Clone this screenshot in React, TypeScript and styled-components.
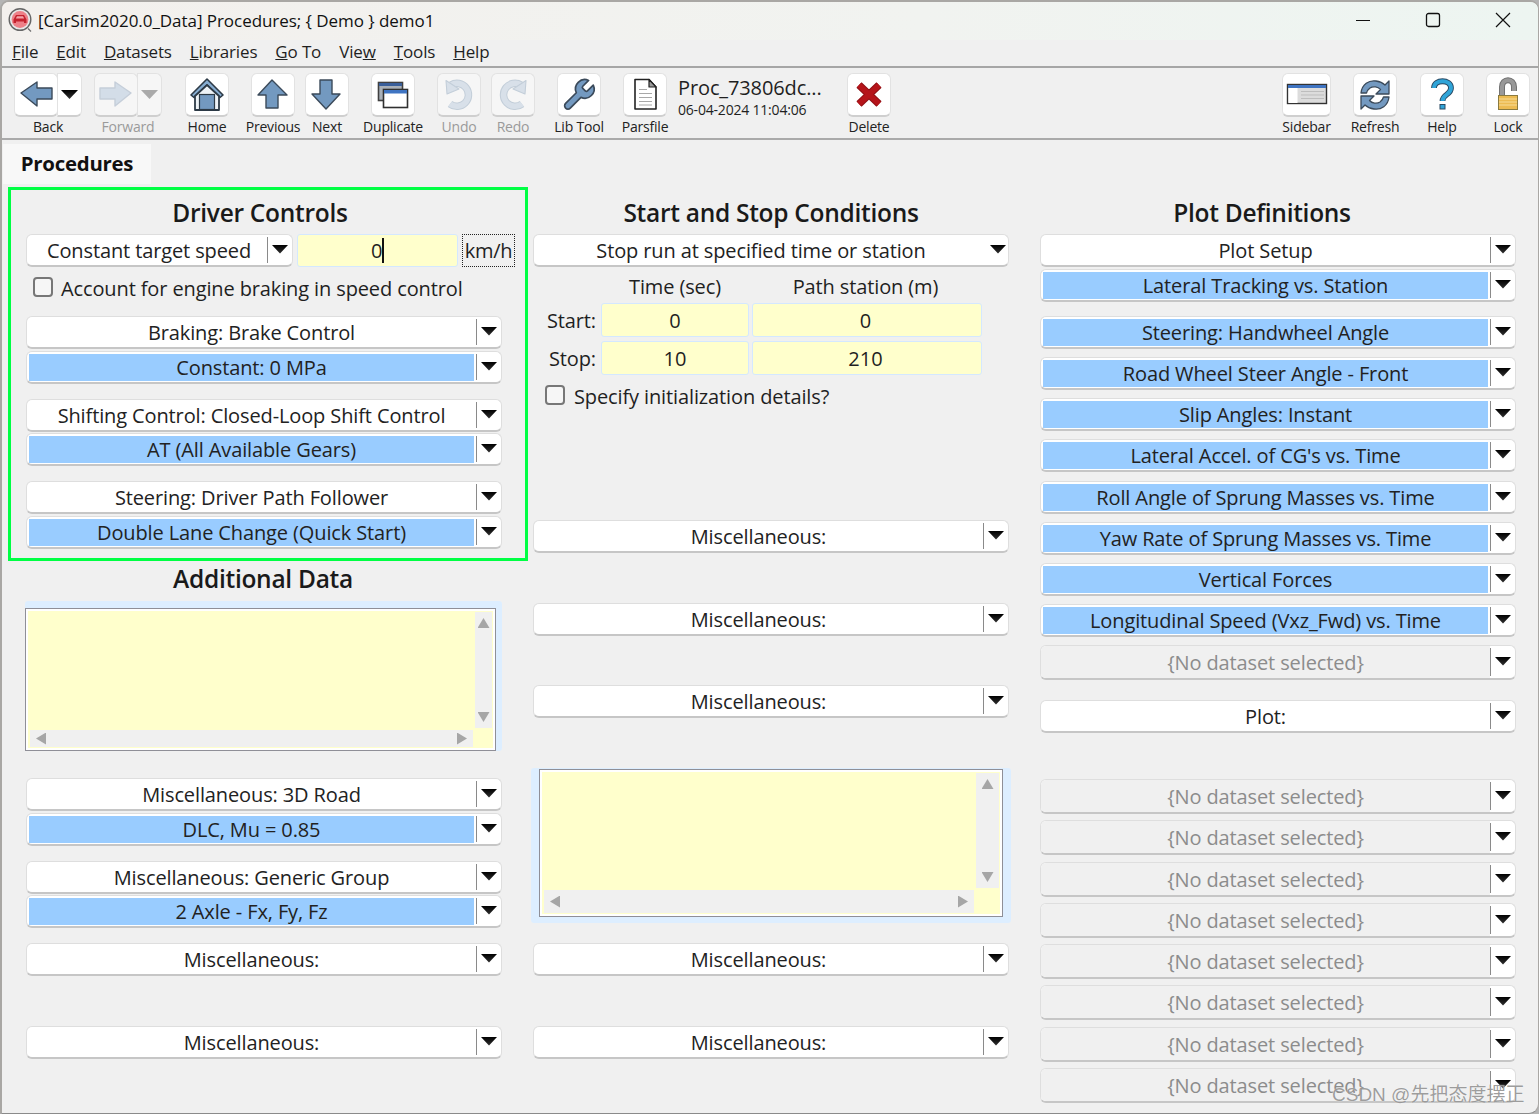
import React from 'react';
import styled, { createGlobalStyle } from 'styled-components';

const Global = createGlobalStyle`
  html, body { margin: 0; padding: 0; background: #b5b5b5; }
  body { width: 1539px; height: 1114px; overflow: hidden; font-family: "Open Sans", "Noto Sans", sans-serif; color: #1f1f1f; }
  * { box-sizing: border-box; }
`;

const Win = styled.div`
  position: relative; width: 1539px; height: 1114px; overflow: hidden;
  background: #f0f0f0; border: solid #a9a7a4; border-width: 2px 1px 1px 2px; border-bottom-color: #8a8a8a;
  border-radius: 9px 9px 10px 0;
`;
const TitleBar = styled.div`
  height: 38px; display: flex; align-items: center; padding: 0 0 2px 6px;
  background: linear-gradient(90deg, #f3f0ed, #f1f3f0 60%, #edf5f1);
`;
const TitleText = styled.div`
  margin-left: 5px; font-size: 17px; letter-spacing: -0.05px; white-space: nowrap; color: #111;
`;
const WinControls = styled.div`
  margin-left: auto; display: flex; align-items: center; width: 184px; height: 100%;
  padding-left: 1px; gap: 54px;
`;
const MenuBar = styled.div`
  height: 28px; display: flex; gap: 18px; align-items: center; padding: 0 0 4px 10px;
  border-bottom: 2px solid #a6a6a6; font-size: 17px; letter-spacing: -0.15px;
`;
const Toolbar = styled.div`
  height: 72px; display: flex; align-items: flex-start; padding: 5px 8px 0 12px;
  border-bottom: 2px solid #aaaaaa;
`;
const Tool = styled.div<{ $gap?: number; $w?: number }>`
  display: flex; flex-direction: column; align-items: center; flex: none;
  width: ${p => p.$w ?? 44}px; margin-left: ${p => p.$gap ?? 0}px;
`;
const ToolLabel = styled.div<{ $off?: boolean }>`
  margin-top: 0; height: 20px; line-height: 20px; font-size: 14px; letter-spacing: -0.2px; white-space: nowrap;
  color: ${p => (p.$off ? '#9a9a9a' : '#222')};
`;
const ToolBtn = styled.div<{ $w?: number; $off?: boolean }>`
  width: ${p => p.$w ?? 44}px; height: 44px; flex: none; background: ${p => (p.$off ? '#f6f6f6' : '#fff')};
  border: 1px solid #e2e2e2; border-bottom: 2px solid #cfcfcf; border-radius: 6px;
  display: flex; align-items: center; justify-content: center;
`;
const SplitBtn = styled.div`
  display: flex; width: 68px;
`;
const DropCell = styled.div<{ $off?: boolean }>`
  flex: none; width: 25px; height: 44px; margin-left: -1px; background: ${p => (p.$off ? '#f6f6f6' : '#fff')};
  border: 1px solid #e2e2e2; border-bottom: 2px solid #cfcfcf; border-radius: 0 6px 6px 0;
  display: flex; align-items: center; justify-content: center;
`;
const Tri = styled.div<{ $off?: boolean }>`
  width: 17px; height: 9px; background: ${p => (p.$off ? '#aaa' : 'linear-gradient(#000, #333)')};
  clip-path: polygon(0 0, 100% 0, 50% 100%);
`;
const FileInfo = styled.div`
  flex: none; width: 158px; margin-left: 11px; margin-top: 2px;
`;
const FileName = styled.div`
  font-size: 20px; line-height: 26px; letter-spacing: -0.12px; white-space: nowrap;
`;
const FileDate = styled.div`
  font-size: 14px; line-height: 18px; letter-spacing: -0.2px; white-space: nowrap;
`;
const ToolRight = styled.div`
  display: flex; margin-left: auto;
`;
const TabRow = styled.div`
  height: 44px; padding: 4px 0 0 1px; 
`;
const Tab = styled.div`
  width: 148px; height: 40px; padding-bottom: 2px; background: #f8f8f8; display: flex; align-items: center; justify-content: center;
  font-size: 20.4px; font-weight: 700; letter-spacing: -0.25px; color: #111;
`;
const Columns = styled.div`
  display: grid; grid-template-columns: 476px 476px 476px; column-gap: 31px; padding: 6px 0 0 24px;
`;
const Col = styled.div`
  display: flex; flex-direction: column; min-width: 0;
`;
const DriverFrame = styled.div`
  display: flex; flex-direction: column; margin: -3px -26px 0 -18px; padding: 0 23px 9px 15px;
  border: 3px solid #00ff44; 
`;
const Heading = styled.div<{ $shift?: number; $top?: number; $h?: number }>`
  height: ${p => p.$h ?? 44}px; padding: ${p => p.$top ?? 9}px ${p => p.$shift ?? 0}px 0 0; line-height: 28px; text-align: center;
  font-size: 24.5px; font-weight: 600; letter-spacing: -0.28px; color: #1a1a1a; white-space: nowrap;
`;
const SelectBox = styled.div<{ $gap?: number; $h?: number; $w?: number }>`
  display: flex; flex: none; height: ${p => p.$h ?? 33}px; width: ${p => (p.$w ? p.$w + 'px' : '100%')};
  margin-top: ${p => p.$gap ?? 0}px; background: #fff; border: 1px solid #dedede; border-bottom: 2px solid #c6c6c6;
  border-radius: 6px; overflow: hidden;
`;
const SelectMain = styled.div<{ $kind?: string; $indent?: number }>`
  flex: 1; min-width: 0; display: flex; align-items: center; justify-content: center; white-space: nowrap;
  font-size: 20px; letter-spacing: -0.12px; padding-left: ${p => p.$indent ?? 0}px;
  color: ${p => (p.$kind === 'empty' ? '#8c8c8c' : '#222')};
  background: ${p => (p.$kind === 'blue' ? '#99ccff' : p.$kind === 'empty' ? '#f0f0f0' : 'transparent')};
  margin: ${p => (p.$kind === 'blue' ? '2px 2px 1px 2px' : '0')};
`;
const SelDivider = styled.div`
  flex: none; width: 1px; margin: 2px 0; background: #8a8a8a;
`;
const SelCell = styled.div<{ $narrow?: boolean }>`
  flex: none; width: ${p => (p.$narrow ? 20 : 24)}px; display: flex; align-items: center; justify-content: center; padding-bottom: 2px;
`;
const Row = styled.div`
  display: flex; align-items: flex-start;
`;
const SpeedInput = styled.div`
  flex: none; width: 161px; height: 33px; margin-left: 4px; background: #ffffcc; border: 1px solid #d4e8ff; border-radius: 3px;
  display: flex; align-items: center; justify-content: center; font-size: 20px; position: relative;
`;
const Caret = styled.span`
  display: inline-block; width: 1.5px; height: 25px; background: #111; margin-left: 0;
`;
const Unit = styled.div`
  flex: none; width: 53px; height: 33px; margin-left: 4px; border: 1px dotted #222; 
  display: flex; align-items: center; justify-content: center; font-size: 20px; letter-spacing: -0.3px; white-space: nowrap;
`;
const CheckRow = styled.label<{ $left?: number; $gapX?: number }>`
  display: flex; align-items: center; gap: ${p => p.$gapX ?? 8}px; height: 42px; padding-left: ${p => p.$left ?? 7}px; font-size: 20px; letter-spacing: -0.12px; white-space: nowrap;
`;
const Check = styled.input`
  appearance: none; width: 20px; height: 20px; margin: -3px 0 0; border: 2px solid #777; border-radius: 4px; background: #f6f6f6; flex: none;
`;
const TimeGrid = styled.div`
  display: grid; grid-template-columns: 65px 148px 230px; column-gap: 3px; align-items: center;
`;
const ColHead = styled.div<{ $nudge?: number }>`
  height: 36px; padding: 3px ${p => p.$nudge ?? 0}px 0 0; display: flex; align-items: center; justify-content: center; font-size: 20px; letter-spacing: -0.12px; white-space: nowrap;
`;
const RowLabel = styled.div<{ $mt?: number }>`
  margin-top: ${p => p.$mt ?? 0}px; text-align: right; padding-right: 2px; font-size: 20px; letter-spacing: -0.12px;
`;
const Cell = styled.div<{ $mt?: number; $nudge?: number }>`
  height: 34px; margin-top: ${p => p.$mt ?? 0}px; padding-right: ${p => p.$nudge ?? 0}px; background: #ffffcc; border: 1px solid #d4e8ff; border-radius: 3px;
  display: flex; align-items: center; justify-content: center; font-size: 20px;
`;
const Halo = styled.div<{ $pad: string; $gap?: number; $mx?: string; $h: number }>`
  display: flex; flex: none; height: ${p => p.$h}px; margin: ${p => p.$gap ?? 0}px ${p => p.$mx ?? '0 0 0'};
  padding: ${p => p.$pad}; background: #ddeeff; border-radius: 3px;
`;
const PaneFrame = styled.div`
  flex: 1; display: flex; padding: 2px; background: #fff; border: 1px solid #8f8f97;
`;
const PaneGrid = styled.div<{ $bar: number }>`
  flex: 1; display: grid; grid-template-columns: 1fr ${p => p.$bar}px; grid-template-rows: 1fr ${p => p.$bar}px;
  gap: 2px; padding: 1px 1px 1px 2px; background: #ffffcc;
`;
const PaneText = styled.div`
  background: #ffffcc;
`;
const VTrack = styled.div`
  background: #f0f0f0; display: flex; flex-direction: column; align-items: center; justify-content: space-between; padding: 6px 0;
`;
const HTrack = styled.div`
  background: #f0f0f0; display: flex; align-items: center; justify-content: space-between; padding: 0 6px;
`;
const Corner = styled.div`
  background: #ffffcc;
`;
const ScrollArrow = styled.div<{ $dir: 'up' | 'down' | 'left' | 'right' }>`
  width: ${p => (p.$dir === 'up' || p.$dir === 'down' ? 12 : 10)}px;
  height: ${p => (p.$dir === 'up' || p.$dir === 'down' ? 10 : 12)}px;
  background: #a6a6a6;
  clip-path: ${p => ({
    up: 'polygon(50% 0, 100% 100%, 0 100%)',
    down: 'polygon(0 0, 100% 0, 50% 100%)',
    left: 'polygon(100% 0, 100% 100%, 0 50%)',
    right: 'polygon(0 0, 100% 50%, 0 100%)',
  }[p.$dir])};
`;
const Watermark = styled.div`
  position: absolute; left: 1330px; top: 1080px; font-family: "Liberation Sans", "Noto Sans CJK SC", sans-serif;
  font-size: 19px; line-height: 26px; color: rgba(120,120,120,.72); white-space: nowrap;
  text-shadow: 0 0 1px rgba(255,255,255,.9);
`;

const Sel = ({ label, kind, gap, w, h, noDiv, indent }: { label: string; kind?: string; gap?: number; w?: number; h?: number; noDiv?: boolean; indent?: number }) => (
  <SelectBox $gap={gap} $w={w} $h={h ?? (kind === 'empty' ? 35 : 33)}>
    <SelectMain $kind={kind} $indent={indent}>{label}</SelectMain>
    {!noDiv && <SelDivider />}
    <SelCell $narrow={noDiv}><Tri /></SelCell>
  </SelectBox>
);

const Pane = ({ bar, pad, gap, mx, h }: { bar: number; pad: string; gap?: number; mx?: string; h: number }) => (
  <Halo $pad={pad} $gap={gap} $mx={mx} $h={h}>
    <PaneFrame>
      <PaneGrid $bar={bar}>
        <PaneText />
        <VTrack><ScrollArrow $dir="up" /><ScrollArrow $dir="down" /></VTrack>
        <HTrack><ScrollArrow $dir="left" /><ScrollArrow $dir="right" /></HTrack>
        <Corner />
      </PaneGrid>
    </PaneFrame>
  </Halo>
);

const BLUE = '#7399c0';
const DARK = '#3b4a5a';
const Svg = ({ children, w = 44 }: { children: React.ReactNode; w?: number }) => (
  <svg width={w} height={44} viewBox={`0 0 ${w} 44`} style={{ margin: -1, flex: 'none' }}>{children}</svg>
);

const ArrowBack = () => (
  <Svg><path d="M7 20 L23 9 V15 H38 V26 H23 V33 Z" fill={BLUE} stroke={DARK} strokeWidth="1.4" strokeLinejoin="round" /></Svg>
);
const ArrowForward = () => (
  <Svg><path d="M37 20 L21 9 V15 H6 V26 H21 V33 Z" fill="#d3dde8" stroke="#c5ced9" strokeWidth="1.4" strokeLinejoin="round" /></Svg>
);
const ArrowUp = () => (
  <Svg><path d="M21 7 L36 22 H27 V35 H15 V22 H7 Z" fill={BLUE} stroke={DARK} strokeWidth="1.4" strokeLinejoin="round" /></Svg>
);
const ArrowDown = () => (
  <Svg><path d="M21 36 L35 21 H27 V7 H15 V21 H7 Z" fill={BLUE} stroke={DARK} strokeWidth="1.4" strokeLinejoin="round" /></Svg>
);
const HomeIcon = () => (
  <Svg>
    <path d="M6 22 L22 6 L38 22 L35 24.5 L22 12 L9 24.5 Z" fill="#86acd0" stroke="#2d3a46" strokeWidth="1.6" strokeLinejoin="round" />
    <path d="M10 23 V37 H34 V23 L22 12 Z" fill="#eef3f7" stroke="#2d3a46" strokeWidth="1.8" strokeLinejoin="round" />
    <rect x="14.5" y="21.5" width="15" height="15" fill={BLUE} stroke="#2d3a46" strokeWidth="1.2" />
  </Svg>
);
const DupIcon = () => (
  <Svg>
    <rect x="7.5" y="9.5" width="24" height="18" fill="#a9b0b8" stroke="#404040" strokeWidth="1.6" />
    <rect x="8" y="10" width="23" height="3" fill="#3a5f9a" />
    <rect x="12.5" y="16.5" width="24" height="18" fill="#fff" stroke="#303030" strokeWidth="1.6" />
    <rect x="13" y="17" width="23" height="3.5" fill="#3f74c2" />
  </Svg>
);
const UndoIcon = ({ flip }: { flip?: boolean }) => (
  <Svg>
    <g transform={flip ? 'translate(44 0) scale(-1 1)' : undefined} fill="none">
      <path d="M14 12 A11.5 11.5 0 1 1 13 31" stroke="#c3ced9" strokeWidth="7.5" />
      <path d="M14 12 A11.5 11.5 0 1 1 13 31" stroke="#d8e0e9" strokeWidth="5.5" />
      <path d="M9 7.5 L10 21 L22 16 Z" fill="#d8e0e9" stroke="#c3ced9" strokeWidth="1.1" strokeLinejoin="round" />
    </g>
  </Svg>
);
const WrenchIcon = () => (
  <Svg>
    <g transform="translate(3 3.5) scale(1.55)">
      <path d="M14.7 6.3a1 1 0 0 0 0 1.4l1.6 1.6a1 1 0 0 0 1.4 0l3.77-3.77a6 6 0 0 1-7.94 7.94l-6.91 6.91a2.12 2.12 0 0 1-3-3l6.91-6.91a6 6 0 0 1 7.94-7.94l-3.76 3.76z" fill={BLUE} stroke={DARK} strokeWidth="1.1" strokeLinejoin="round" />
    </g>
  </Svg>
);
const PageIcon = () => (
  <Svg>
    <path d="M12 6.5 H26 L33 14 V36 H12 Z" fill="#fff" stroke="#222" strokeWidth="1.6" strokeLinejoin="round" />
    <path d="M26 6.5 V14 H33 Z" fill="#9a9a9a" stroke="#222" strokeWidth="1.2" strokeLinejoin="round" />
    <path d="M16 16.5 H24 M16 20.5 H29 M16 24.5 H29 M16 28.5 H29 M16 32 H29" stroke="#a8a8a8" strokeWidth="1" />
  </Svg>
);
const DeleteIcon = () => (
  <Svg>
    <path d="M12 12 L32 31 M32 12 L12 31" stroke="#8f1015" strokeWidth="7.5" />
    <path d="M12 12 L32 31 M32 12 L12 31" stroke="#b5141a" strokeWidth="5.5" />
  </Svg>
);
const SidebarIcon = () => (
  <Svg w={49}>
    <rect x="5.5" y="11.5" width="39" height="19" fill="#dcdcdc" stroke="#333" strokeWidth="1.4" />
    <rect x="6" y="12" width="38" height="3" fill="#3f74c2" />
    <rect x="6.5" y="15" width="9" height="15" fill="#fff" />
    <path d="M19 18.5 H42 M19 22 H42 M19 25.5 H42" stroke="#bdbdbd" strokeWidth="1" />
  </Svg>
);
const RefreshIcon = () => (
  <Svg>
    <g fill={BLUE} stroke={DARK} strokeWidth="1.3" strokeLinejoin="round">
      <path d="M8 20 C9 11 16 7 23 8 C27 8.5 30 10 32 12 L36 8 V21 H23 L27.5 16.5 C25 13.5 20 13 17 15 C15 16.5 14 18 13.5 20 Z" />
      <path d="M36 24 C35 33 28 37 21 36 C17 35.5 14 34 12 32 L8 36 V23 H21 L16.5 27.5 C19 30.5 24 31 27 29 C29 27.5 30 26 30.5 24 Z" />
    </g>
  </Svg>
);
const HelpIcon = () => (
  <Svg>
    <path d="M14 15 C14 6 31 6 31 15 C31 22 22.5 21 22.5 28" fill="none" stroke="#2b4a63" strokeWidth="5.8" />
    <path d="M14 15 C14 6 31 6 31 15 C31 22 22.5 21 22.5 28" fill="none" stroke="#2fa4d8" strokeWidth="3.9" />
    <rect x="20" y="31.5" width="5" height="4.5" fill="#2fa4d8" stroke="#2b4a63" strokeWidth="1" />
  </Svg>
);
const LockIcon = () => (
  <Svg>
    <path d="M16 23 V14 C16 5 28 5 28 14 V18" fill="none" stroke="#6f6f6f" strokeWidth="6" />
    <path d="M16 23 V14 C16 5 28 5 28 14 V18" fill="none" stroke="#999999" strokeWidth="4.2" />
    <rect x="12.5" y="22.5" width="19" height="14" fill="#ecbb52" stroke="#8a7a40" strokeWidth="1" />
    <path d="M13 26 H31 M13 29 H31 M13 32 H31" stroke="#f7dc97" strokeWidth="1" />
  </Svg>
);
const Logo = () => (
  <svg width="25" height="25" viewBox="0 0 25 25" style={{ flex: 'none' }}>
    <circle cx="12" cy="11.5" r="10.8" fill="#e6e8e8" stroke="#666" strokeWidth="1.4" />
    <circle cx="12" cy="11.5" r="8.4" fill="#ee8088" />
    <path d="M5.5 15 V11.5 L8 7 H16 L18.5 11.5 V15 H16 V13.5 H8 V15 Z" fill="#c4222e" />
    <path d="M9 8.2 H15 L16.2 10.6 H7.8 Z" fill="#f3a4aa" />
    <path d="M20 20.5 L23 23.5" stroke="#6f6f6f" strokeWidth="1.2" />
  </svg>
);

const Item = ({ label, gap, off, children }: { label: string; gap?: number; off?: boolean; children: React.ReactNode }) => (
  <Tool $gap={gap}>
    <ToolBtn $off={off}>{children}</ToolBtn>
    <ToolLabel $off={off}>{label}</ToolLabel>
  </Tool>
);

const plotA: [string, string | undefined, number][] = [
  ['Plot Setup', undefined, 0],
  ['Lateral Tracking vs. Station', 'blue', 2],
  ['Steering: Handwheel Angle', 'blue', 14],
  ['Road Wheel Steer Angle - Front', 'blue', 8],
  ['Slip Angles: Instant', 'blue', 8],
  ["Lateral Accel. of CG's vs. Time", 'blue', 8],
  ['Roll Angle of Sprung Masses vs. Time', 'blue', 9],
  ['Yaw Rate of Sprung Masses vs. Time', 'blue', 8],
  ['Vertical Forces', 'blue', 8],
  ['Longitudinal Speed (Vxz_Fwd) vs. Time', 'blue', 8],
  ['{No dataset selected}', 'empty', 8],
  ['Plot:', undefined, 20],
  ['{No dataset selected}', 'empty', 46],
  ['{No dataset selected}', 'empty', 6],
  ['{No dataset selected}', 'empty', 7],
  ['{No dataset selected}', 'empty', 6],
  ['{No dataset selected}', 'empty', 6],
  ['{No dataset selected}', 'empty', 6],
  ['{No dataset selected}', 'empty', 7],
  ['{No dataset selected}', 'empty', 6],
];

export default function App() {
  return (
    <Win>
      <Global />
      <TitleBar>
        <Logo />
        <TitleText>[CarSim2020.0_Data] Procedures; {'{'} Demo {'}'} demo1</TitleText>
        <WinControls>
          <svg width="16" height="16" viewBox="0 0 16 16"><path d="M1 8.5 H15" stroke="#111" strokeWidth="1.1" /></svg>
          <svg width="16" height="16" viewBox="0 0 16 16"><rect x="1.5" y="1.5" width="13" height="13" rx="2" fill="none" stroke="#111" strokeWidth="1.3" /></svg>
          <svg width="16" height="16" viewBox="0 0 16 16"><path d="M1 1 L15 15 M15 1 L1 15" stroke="#111" strokeWidth="1.2" /></svg>
        </WinControls>
      </TitleBar>
      <MenuBar>
        <span><u>F</u>ile</span>
        <span><u>E</u>dit</span>
        <span><u>D</u>atasets</span>
        <span><u>L</u>ibraries</span>
        <span><u>G</u>o To</span>
        <span>Vie<u>w</u></span>
        <span><u>T</u>ools</span>
        <span><u>H</u>elp</span>
      </MenuBar>
      <Toolbar>
        <Tool $w={68}>
          <SplitBtn><ToolBtn><ArrowBack /></ToolBtn><DropCell><Tri /></DropCell></SplitBtn>
          <ToolLabel>Back</ToolLabel>
        </Tool>
        <Tool $w={68} $gap={12}>
          <SplitBtn><ToolBtn $off><ArrowForward /></ToolBtn><DropCell $off><Tri $off /></DropCell></SplitBtn>
          <ToolLabel $off>Forward</ToolLabel>
        </Tool>
        <Item label="Home" gap={23}><HomeIcon /></Item>
        <Item label="Previous" gap={22}><ArrowUp /></Item>
        <Item label="Next" gap={10}><ArrowDown /></Item>
        <Item label="Duplicate" gap={22}><DupIcon /></Item>
        <Item label="Undo" gap={22} off><UndoIcon /></Item>
        <Item label="Redo" gap={10} off><UndoIcon flip /></Item>
        <Item label="Lib Tool" gap={22}><WrenchIcon /></Item>
        <Item label="Parsfile" gap={22}><PageIcon /></Item>
        <FileInfo>
          <FileName>Proc_73806dc...</FileName>
          <FileDate>06-04-2024 11:04:06</FileDate>
        </FileInfo>
        <Item label="Delete" gap={11}><DeleteIcon /></Item>
        <ToolRight>
          <Tool $w={49}><ToolBtn $w={49}><SidebarIcon /></ToolBtn><ToolLabel>Sidebar</ToolLabel></Tool>
          <Item label="Refresh" gap={22}><RefreshIcon /></Item>
          <Item label="Help" gap={23}><HelpIcon /></Item>
          <Item label="Lock" gap={22}><LockIcon /></Item>
        </ToolRight>
      </Toolbar>
      <TabRow><Tab>Procedures</Tab></TabRow>
      <Columns>
        <Col>
          <DriverFrame>
            <Heading $shift={8}>Driver Controls</Heading>
            <Row>
              <Sel label="Constant target speed" w={267} indent={4} />
              <SpeedInput>0<Caret /></SpeedInput>
              <Unit>km/h</Unit>
            </Row>
            <CheckRow><Check type="checkbox" />Account for engine braking in speed control</CheckRow>
            <Sel label="Braking: Brake Control" gap={7} />
            <Sel label="Constant: 0 MPa" kind="blue" gap={2} />
            <Sel label="Shifting Control: Closed-Loop Shift Control" gap={15} />
            <Sel label="AT (All Available Gears)" kind="blue" gap={1} />
            <Sel label="Steering: Driver Path Follower" gap={15} />
            <Sel label="Double Lane Change (Quick Start)" kind="blue" gap={2} />
          </DriverFrame>
          <Heading $h={40} $top={4} $shift={2}>Additional Data</Heading>
          <Pane bar={17} pad="7px 6px 0 0" mx="0 0 -1px" h={150} />
          <Sel label="Miscellaneous: 3D Road" gap={27} />
          <Sel label="DLC, Mu = 0.85" kind="blue" gap={2} />
          <Sel label="Miscellaneous: Generic Group" gap={15} />
          <Sel label="2 Axle - Fx, Fy, Fz" kind="blue" gap={1} />
          <Sel label="Miscellaneous:" gap={15} />
          <Sel label="Miscellaneous:" gap={50} />
        </Col>
        <Col>
          <Heading>Start and Stop Conditions</Heading>
          <Sel label="Stop run at specified time or station" noDiv />
          <TimeGrid>
            <span />
            <ColHead>Time (sec)</ColHead>
            <ColHead $nudge={3}>Path station (m)</ColHead>
            <RowLabel>Start:</RowLabel>
            <Cell>0</Cell>
            <Cell $nudge={3}>0</Cell>
            <RowLabel $mt={4}>Stop:</RowLabel>
            <Cell $mt={4}>10</Cell>
            <Cell $mt={4} $nudge={3}>210</Cell>
          </TimeGrid>
          <CheckRow $left={12} $gapX={9}><Check type="checkbox" />Specify initialization details?</CheckRow>
          <Sel label="Miscellaneous:" gap={103} />
          <Sel label="Miscellaneous:" gap={50} />
          <Sel label="Miscellaneous:" gap={49} />
          <Pane bar={23} pad="1px 8px 6px 8px" gap={50} mx="-2px 0 -2px" h={155} />
          <Sel label="Miscellaneous:" gap={20} />
          <Sel label="Miscellaneous:" gap={50} />
        </Col>
        <Col>
          <Heading $shift={32}>Plot Definitions</Heading>
          {plotA.map(([l, k, g], i) => <Sel key={i} label={l} kind={k} gap={g} />)}
        </Col>
      </Columns>
      <Watermark>CSDN @先把态度摆正</Watermark>
    </Win>
  );
}
